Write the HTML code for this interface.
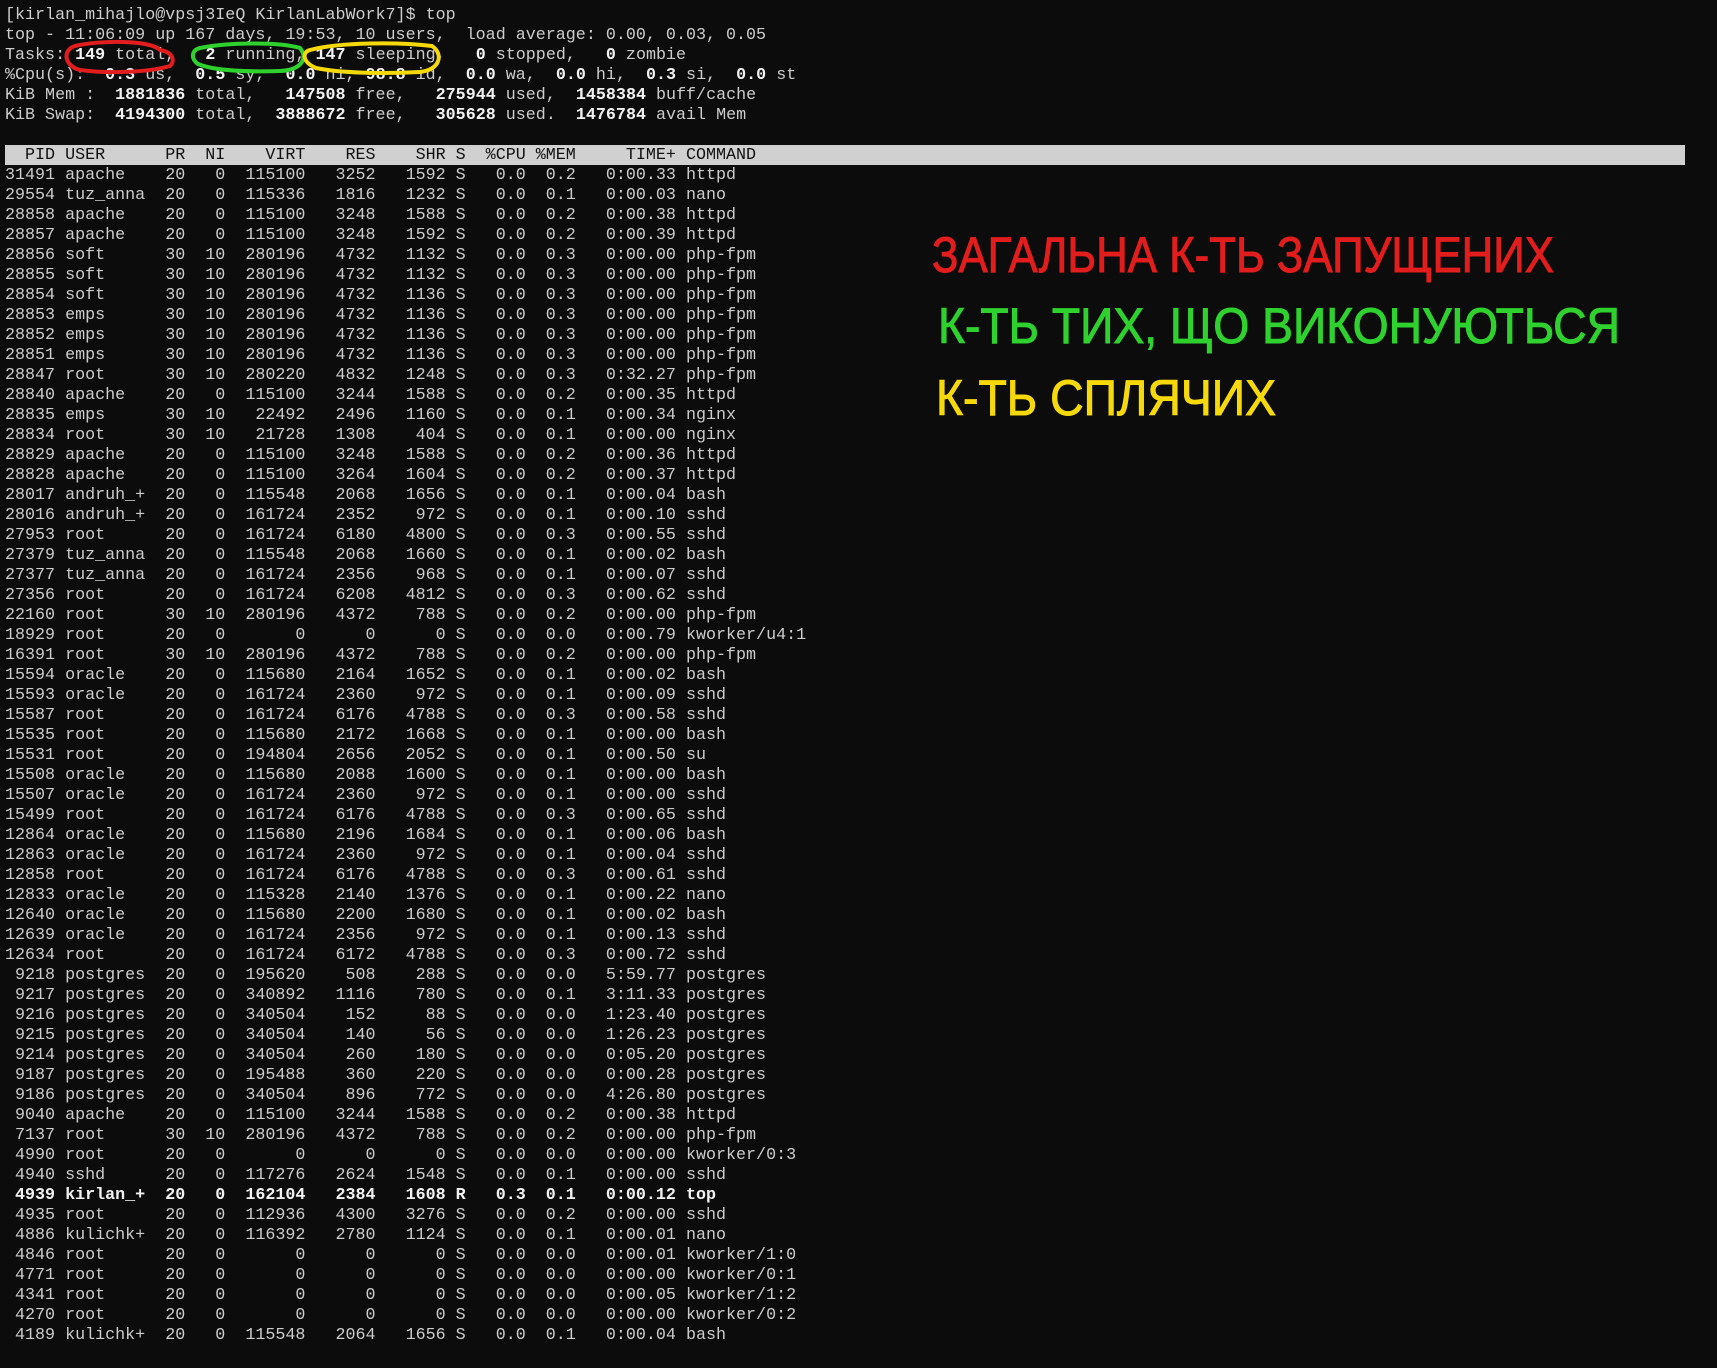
<!DOCTYPE html>
<html><head><meta charset="utf-8"><style>
html,body{margin:0;padding:0;background:#0c0c0c;width:1717px;height:1368px;overflow:hidden}
pre{position:absolute;left:5px;top:6px;margin:0;font-family:"Liberation Mono",monospace;font-size:16.7px;line-height:20px;color:#cccccc;white-space:pre}
b{color:#f2f2f2}
.bar{position:absolute;left:5px;top:145px;width:1680px;height:20px;background:#d0d0d0}
.hd{color:#111}
svg{position:absolute;left:0;top:0}
</style></head><body>
<div class="bar"></div>
<pre>[kirlan_mihajlo@vpsj3IeQ KirlanLabWork7]$ top
top - 11:06:09 up 167 days, 19:53, 10 users,  load average: 0.00, 0.03, 0.05
Tasks: <b>149</b> total,   <b>2</b> running, <b>147</b> sleeping,   <b>0</b> stopped,   <b>0</b> zombie
%Cpu(s):  <b>0.3</b> us,  <b>0.5</b> sy,  <b>0.0</b> ni, <b>98.8</b> id,  <b>0.0</b> wa,  <b>0.0</b> hi,  <b>0.3</b> si,  <b>0.0</b> st
KiB Mem :  <b>1881836</b> total,   <b>147508</b> free,   <b>275944</b> used,  <b>1458384</b> buff/cache
KiB Swap:  <b>4194300</b> total,  <b>3888672</b> free,   <b>305628</b> used.  <b>1476784</b> avail Mem

<span class="hd">  PID USER      PR  NI    VIRT    RES    SHR S  %CPU %MEM     TIME+ COMMAND</span>
31491 apache    20   0  115100   3252   1592 S   0.0  0.2   0:00.33 httpd
29554 tuz_anna  20   0  115336   1816   1232 S   0.0  0.1   0:00.03 nano
28858 apache    20   0  115100   3248   1588 S   0.0  0.2   0:00.38 httpd
28857 apache    20   0  115100   3248   1592 S   0.0  0.2   0:00.39 httpd
28856 soft      30  10  280196   4732   1132 S   0.0  0.3   0:00.00 php-fpm
28855 soft      30  10  280196   4732   1132 S   0.0  0.3   0:00.00 php-fpm
28854 soft      30  10  280196   4732   1136 S   0.0  0.3   0:00.00 php-fpm
28853 emps      30  10  280196   4732   1136 S   0.0  0.3   0:00.00 php-fpm
28852 emps      30  10  280196   4732   1136 S   0.0  0.3   0:00.00 php-fpm
28851 emps      30  10  280196   4732   1136 S   0.0  0.3   0:00.00 php-fpm
28847 root      30  10  280220   4832   1248 S   0.0  0.3   0:32.27 php-fpm
28840 apache    20   0  115100   3244   1588 S   0.0  0.2   0:00.35 httpd
28835 emps      30  10   22492   2496   1160 S   0.0  0.1   0:00.34 nginx
28834 root      30  10   21728   1308    404 S   0.0  0.1   0:00.00 nginx
28829 apache    20   0  115100   3248   1588 S   0.0  0.2   0:00.36 httpd
28828 apache    20   0  115100   3264   1604 S   0.0  0.2   0:00.37 httpd
28017 andruh_+  20   0  115548   2068   1656 S   0.0  0.1   0:00.04 bash
28016 andruh_+  20   0  161724   2352    972 S   0.0  0.1   0:00.10 sshd
27953 root      20   0  161724   6180   4800 S   0.0  0.3   0:00.55 sshd
27379 tuz_anna  20   0  115548   2068   1660 S   0.0  0.1   0:00.02 bash
27377 tuz_anna  20   0  161724   2356    968 S   0.0  0.1   0:00.07 sshd
27356 root      20   0  161724   6208   4812 S   0.0  0.3   0:00.62 sshd
22160 root      30  10  280196   4372    788 S   0.0  0.2   0:00.00 php-fpm
18929 root      20   0       0      0      0 S   0.0  0.0   0:00.79 kworker/u4:1
16391 root      30  10  280196   4372    788 S   0.0  0.2   0:00.00 php-fpm
15594 oracle    20   0  115680   2164   1652 S   0.0  0.1   0:00.02 bash
15593 oracle    20   0  161724   2360    972 S   0.0  0.1   0:00.09 sshd
15587 root      20   0  161724   6176   4788 S   0.0  0.3   0:00.58 sshd
15535 root      20   0  115680   2172   1668 S   0.0  0.1   0:00.00 bash
15531 root      20   0  194804   2656   2052 S   0.0  0.1   0:00.50 su
15508 oracle    20   0  115680   2088   1600 S   0.0  0.1   0:00.00 bash
15507 oracle    20   0  161724   2360    972 S   0.0  0.1   0:00.00 sshd
15499 root      20   0  161724   6176   4788 S   0.0  0.3   0:00.65 sshd
12864 oracle    20   0  115680   2196   1684 S   0.0  0.1   0:00.06 bash
12863 oracle    20   0  161724   2360    972 S   0.0  0.1   0:00.04 sshd
12858 root      20   0  161724   6176   4788 S   0.0  0.3   0:00.61 sshd
12833 oracle    20   0  115328   2140   1376 S   0.0  0.1   0:00.22 nano
12640 oracle    20   0  115680   2200   1680 S   0.0  0.1   0:00.02 bash
12639 oracle    20   0  161724   2356    972 S   0.0  0.1   0:00.13 sshd
12634 root      20   0  161724   6172   4788 S   0.0  0.3   0:00.72 sshd
 9218 postgres  20   0  195620    508    288 S   0.0  0.0   5:59.77 postgres
 9217 postgres  20   0  340892   1116    780 S   0.0  0.1   3:11.33 postgres
 9216 postgres  20   0  340504    152     88 S   0.0  0.0   1:23.40 postgres
 9215 postgres  20   0  340504    140     56 S   0.0  0.0   1:26.23 postgres
 9214 postgres  20   0  340504    260    180 S   0.0  0.0   0:05.20 postgres
 9187 postgres  20   0  195488    360    220 S   0.0  0.0   0:00.28 postgres
 9186 postgres  20   0  340504    896    772 S   0.0  0.0   4:26.80 postgres
 9040 apache    20   0  115100   3244   1588 S   0.0  0.2   0:00.38 httpd
 7137 root      30  10  280196   4372    788 S   0.0  0.2   0:00.00 php-fpm
 4990 root      20   0       0      0      0 S   0.0  0.0   0:00.00 kworker/0:3
 4940 sshd      20   0  117276   2624   1548 S   0.0  0.1   0:00.00 sshd
<b> 4939 kirlan_+  20   0  162104   2384   1608 R   0.3  0.1   0:00.12 top</b>
 4935 root      20   0  112936   4300   3276 S   0.0  0.2   0:00.00 sshd
 4886 kulichk+  20   0  116392   2780   1124 S   0.0  0.1   0:00.01 nano
 4846 root      20   0       0      0      0 S   0.0  0.0   0:00.01 kworker/1:0
 4771 root      20   0       0      0      0 S   0.0  0.0   0:00.00 kworker/0:1
 4341 root      20   0       0      0      0 S   0.0  0.0   0:00.05 kworker/1:2
 4270 root      20   0       0      0      0 S   0.0  0.0   0:00.00 kworker/0:2
 4189 kulichk+  20   0  115548   2064   1656 S   0.0  0.1   0:00.04 bash</pre>
<svg width="1717" height="1368" viewBox="0 0 1717 1368">
<g fill="none" stroke-width="4" stroke-linecap="round">
<path d="M160 50 C150 40 100 40 75 46 C62 50 64 66 80 70 C110 74 150 72 170 66 C176 60 172 52 160 50" stroke="#e11d1d"/>
<path d="M200 48 C230 42 280 42 300 48 C308 58 302 70 280 71 C250 72 215 71 198 64 C190 58 192 50 200 48" stroke="#2ed12e"/>
<path d="M310 50 C340 42 400 42 432 46 C444 54 440 70 420 72 C380 74 340 73 316 68 C302 62 302 52 310 50" stroke="#f5d90a"/>
</g>
<g font-family="Liberation Sans, sans-serif" font-size="50" stroke-width="1">
<text x="932" y="272" fill="#e11d1d" stroke="#e11d1d" textLength="622" lengthAdjust="spacingAndGlyphs">ЗАГАЛЬНА К-ТЬ ЗАПУЩЕНИХ</text>
<text x="938" y="343" fill="#2ed12e" stroke="#2ed12e" textLength="682" lengthAdjust="spacingAndGlyphs">К-ТЬ ТИХ, ЩО ВИКОНУЮТЬСЯ</text>
<text x="936" y="415" fill="#f5d90a" stroke="#f5d90a" textLength="340" lengthAdjust="spacingAndGlyphs">К-ТЬ СПЛЯЧИХ</text>
</g>
</svg>
</body></html>
